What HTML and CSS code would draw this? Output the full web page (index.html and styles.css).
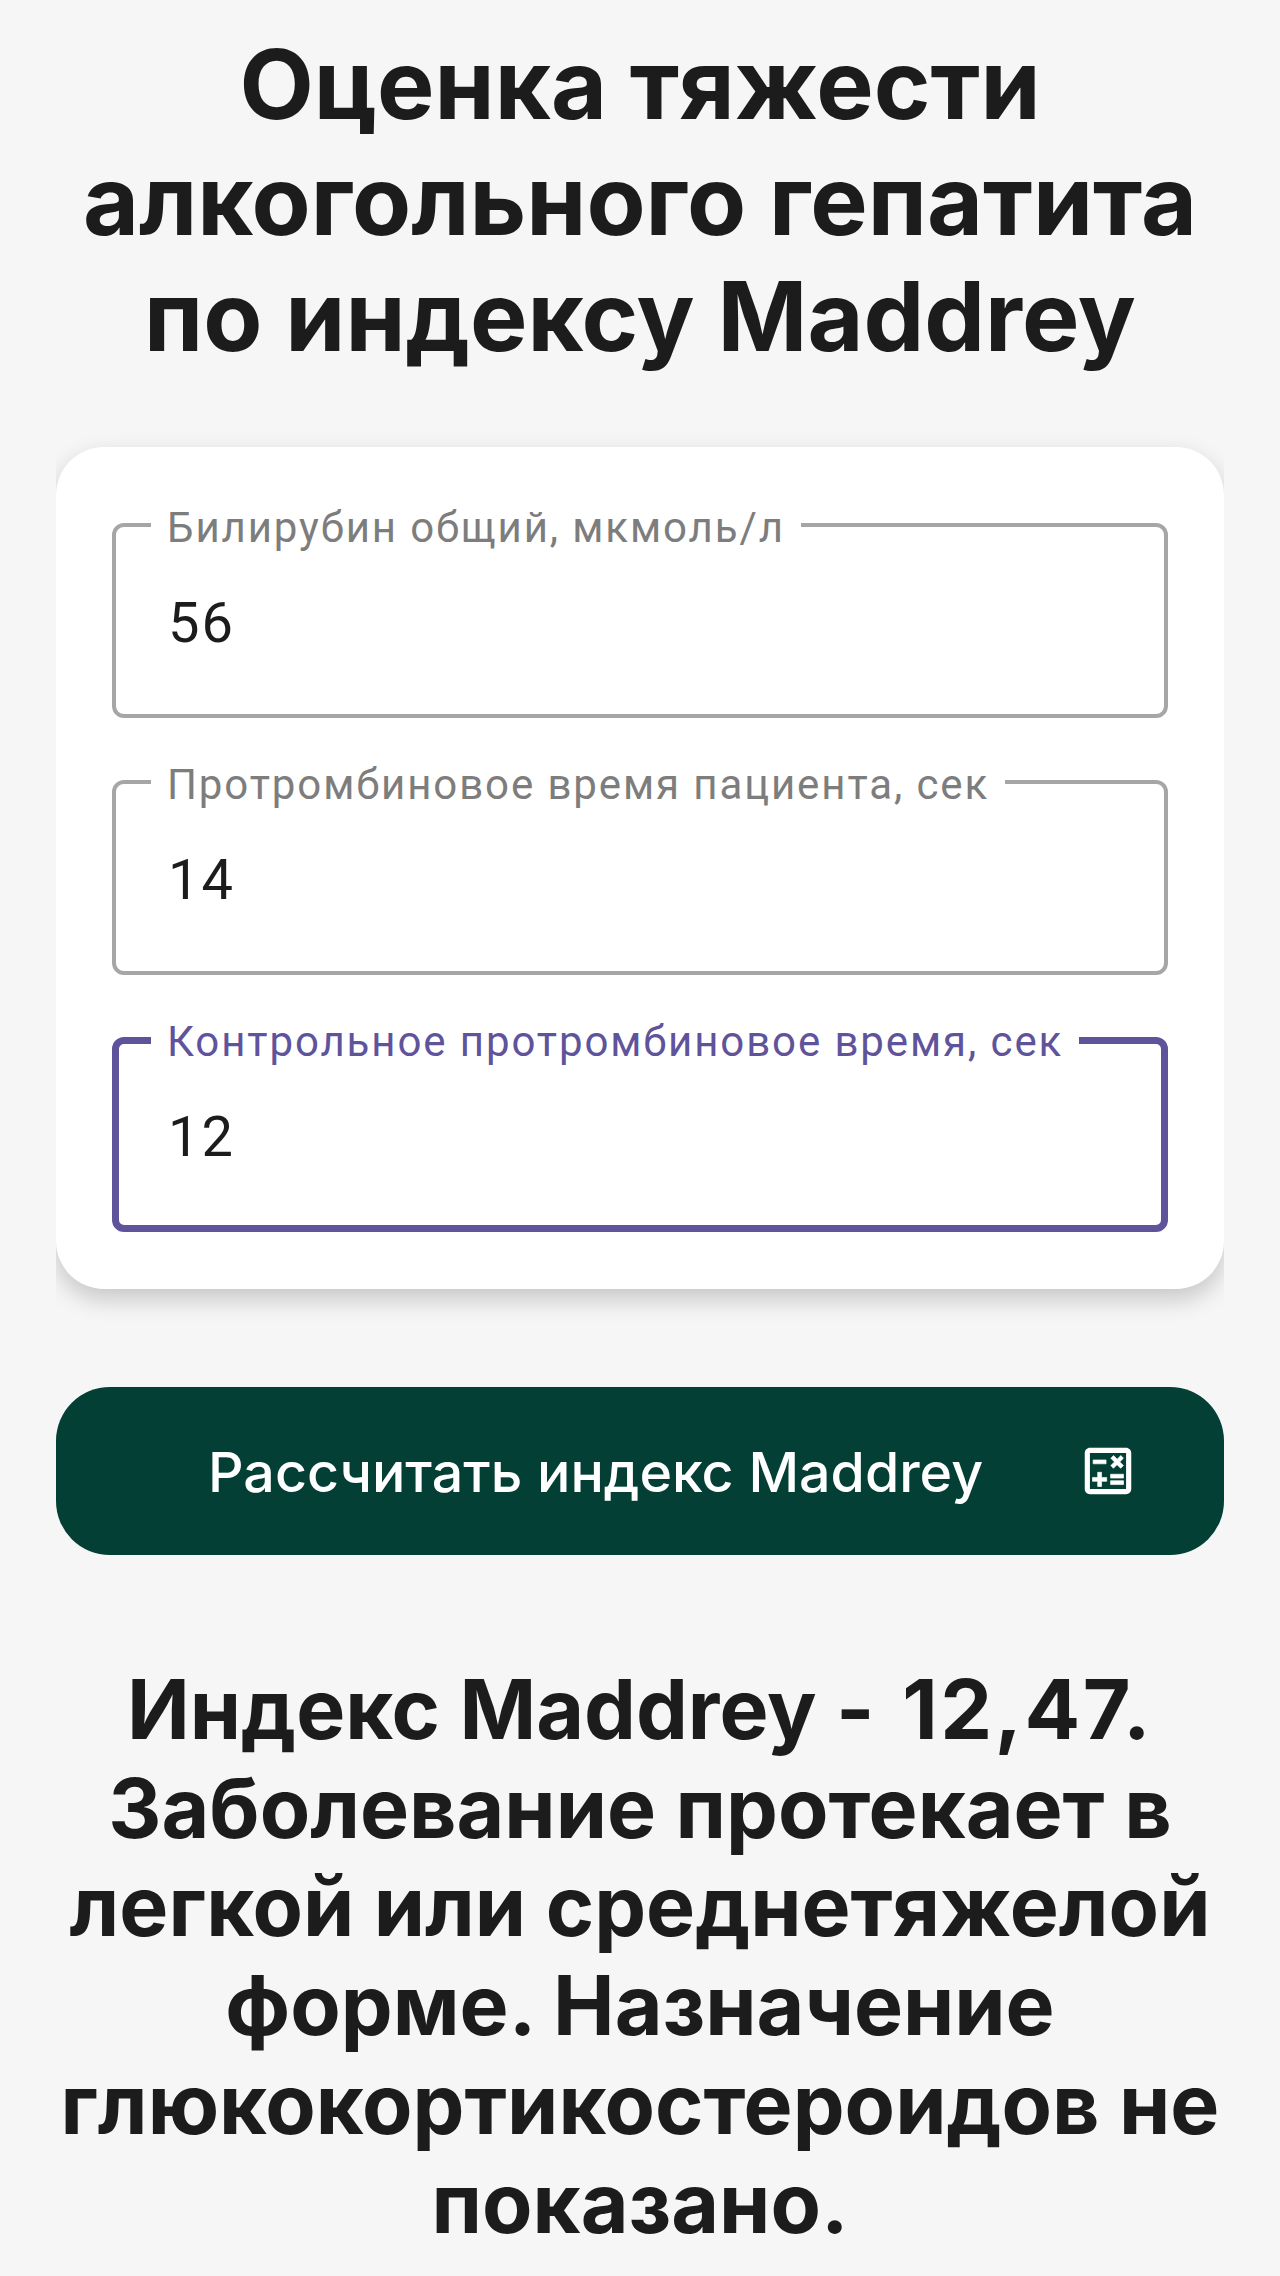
FILE: index.html
```html
<!DOCTYPE html>
<html lang="ru">
<head>
<meta charset="utf-8">
<title>Оценка тяжести алкогольного гепатита</title>
<link rel="stylesheet" href="styles.css">
</head>
<body>
<main class="page">
  <h1 class="title">Оценка тяжести<br>алкогольного гепатита<br>по индексу Maddrey</h1>
  <section class="card">
    <div class="field">
      <span class="field-label">Билирубин общий, мкмоль/л</span>
      <div class="field-value">56</div>
    </div>
    <div class="field">
      <span class="field-label">Протромбиновое время пациента, сек</span>
      <div class="field-value">14</div>
    </div>
    <div class="field field-focused">
      <span class="field-label">Контрольное протромбиновое время, сек</span>
      <div class="field-value">12</div>
    </div>
  </section>
  <button class="action" type="button">
    <span class="action-text">Рассчитать индекс Maddrey</span>
    <svg class="action-icon" viewBox="0 0 24 24" aria-hidden="true">
      <path d="M19 3H5c-1.1 0-2 .9-2 2v14c0 1.1.9 2 2 2h14c1.1 0 2-.9 2-2V5c0-1.1-.9-2-2-2zm0 16H5V5h14v14z"/>
      <path class="action-icon-marks" d="M6.25 7.72h5v1.5h-5zM13 15.75h5v1.5h-5zM13 13.25h5v1.5h-5zM8 18h1.5v-2h2v-1.5h-2v-2H8v2H6V16h2zM14.09 10.95l1.41-1.41 1.41 1.41 1.06-1.06-1.41-1.42 1.41-1.41L16.97 6l-1.41 1.41L14.15 6l-1.06 1.06 1.41 1.41-1.41 1.42z"/>
    </svg>
  </button>
  <p class="result">Индекс Maddrey - <span class="result-number">12,47.</span><br>Заболевание протекает в<br>легкой или среднетяжелой<br>форме. Назначение<br>глюкокортикостероидов не<br>показано.</p>
</main>
</body>
</html>
```
FILE: styles.css
```css
html, body {
  margin: 0;
  padding: 0;
  background: #f6f6f6;
}
body {
  font-family: "Inter", "Noto Sans", sans-serif;
  color: #1c1c1c;
}
.page {
  display: flex;
  flex-direction: column;
  padding: 26px 56px 0;
  height: 2250px;
  overflow: hidden;
}
.title {
  margin: 0 -20px;
  font-size: 96.5px;
  line-height: 116px;
  font-weight: 700;
  text-align: center;
  white-space: nowrap;
}
.card {
  margin-top: 73px;
  display: flex;
  flex-direction: column;
  gap: 62px;
  padding: 76px 56px 57px;
  background: #fff;
  border-radius: 48px;
  box-shadow: 0 10px 24px rgba(0, 0, 0, 0.2);
  clip-path: inset(-40px 0 -40px 0 round 0);
}
.field {
  position: relative;
  box-sizing: border-box;
  height: 195px;
  padding: 64px 52px 0;
  border: 4px solid #a6a6a6;
  border-radius: 12px;
}
.field-focused {
  border: 7px solid #5f549c;
  padding: 61px 49px 0;
}
.field-label {
  position: absolute;
  top: -24px;
  left: 35px;
  padding: 0 16px;
  background: #fff;
  font-family: "Roboto", sans-serif;
  font-size: 42px;
  line-height: 50px;
  letter-spacing: 1.9px;
  color: #7d7d7d;
  white-space: nowrap;
}
.field-focused .field-label {
  top: -27px;
  left: 32px;
  color: #5f549c;
}
.field-value {
  font-family: "Roboto", sans-serif;
  font-size: 56px;
  line-height: 64px;
  letter-spacing: 2px;
  color: #1c1c1c;
}
.action {
  position: relative;
  margin-top: 98px;
  height: 168px;
  flex: none;
  display: flex;
  align-items: center;
  padding: 0 85px 0 152px;
  border: 0;
  border-radius: 54px;
  background: #033f35;
  color: #fff;
  font-family: "Inter", sans-serif;
  font-size: 55.5px;
  font-weight: 500;
}
.action-text {
  flex: 1;
  text-align: left;
  white-space: nowrap;
}
.action-icon {
  width: 62px;
  height: 62px;
  fill: #fff;
}
.action-icon-marks {
  stroke: #fff;
  stroke-width: 0.25;
}
.result {
  margin: 105px -20px 0;
  font-size: 82.4px;
  line-height: 98.7px;
  font-weight: 700;
  text-align: center;
  white-space: nowrap;
}
.result-number {
  margin-left: 8px;
  letter-spacing: 2.5px;
}
```
